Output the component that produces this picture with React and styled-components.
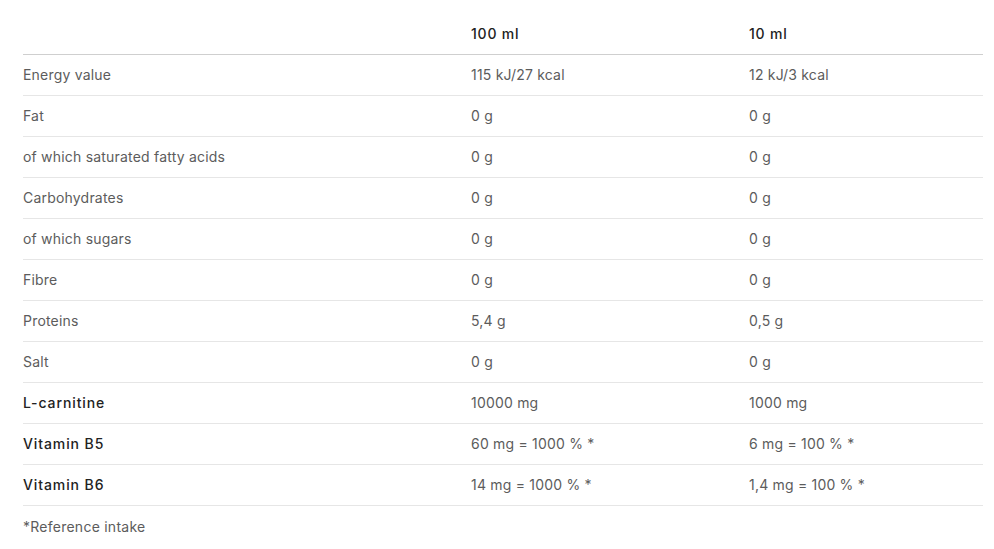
import React from "react";
import styled, { createGlobalStyle } from "styled-components";

const GlobalStyle = createGlobalStyle`
  body {
    margin: 0;
    background: #fff;
    font-family: Inter, "Open Sans", Arial, sans-serif;
  }
`;

const rows = [
  ["Energy value", "115 kJ/27 kcal", "12 kJ/3 kcal"],
  ["Fat", "0 g", "0 g"],
  ["of which saturated fatty acids", "0 g", "0 g"],
  ["Carbohydrates", "0 g", "0 g"],
  ["of which sugars", "0 g", "0 g"],
  ["Fibre", "0 g", "0 g"],
  ["Proteins", "5,4 g", "0,5 g"],
  ["Salt", "0 g", "0 g"],
  ["L-carnitine", "10000 mg", "1000 mg", true],
  ["Vitamin B5", "60 mg = 1000 % *", "6 mg = 100 % *", true],
  ["Vitamin B6", "14 mg = 1000 % *", "1,4 mg = 100 % *", true],
];

function App() {
  return (
    <Wrapper>
      <GlobalStyle />
      <Table>
        <HeadRow>
          <Cell />
          <HeadCell>100 ml</HeadCell>
          <HeadCell>10 ml</HeadCell>
        </HeadRow>
        {rows.map(([name, a, b, bold]) => (
          <Row key={name}>
            <Cell $bold={bold}>{name}</Cell>
            <Cell>{a}</Cell>
            <Cell>{b}</Cell>
          </Row>
        ))}
      </Table>
      <Note>*Reference intake</Note>
    </Wrapper>
  );
}

const Wrapper = styled.div`
  padding: 14px 0 0 23px;
  width: 960px;
`;

const Table = styled.div`
  display: flex;
  flex-direction: column;
`;

const Row = styled.div`
  display: grid;
  grid-template-columns: 448px 278px 234px;
  height: 40px;
  align-items: center;
  border-bottom: 1px solid #e6e6e6;
`;

const HeadRow = styled(Row)`
  border-bottom-color: #cfcfcf;
`;

const Cell = styled.div`
  font-size: 14px;
  line-height: 20px;
  padding-bottom: 1px;
  letter-spacing: ${(p) => (p.$bold ? "0.9px" : "0.2px")};
  color: ${(p) => (p.$bold ? "#222" : "#5c5c5c")};
  font-weight: ${(p) => (p.$bold ? 500 : 400)};
  white-space: nowrap;
`;

const HeadCell = styled(Cell)`
  color: #222;
  font-weight: 500;
  letter-spacing: 0.8px;
`;

const Note = styled.div`
  height: 42px;
  padding-bottom: 1px;
  box-sizing: border-box;
  display: flex;
  align-items: center;
  font-size: 14px;
  letter-spacing: 0.25px;
  color: #5c5c5c;
`;

export default App;
